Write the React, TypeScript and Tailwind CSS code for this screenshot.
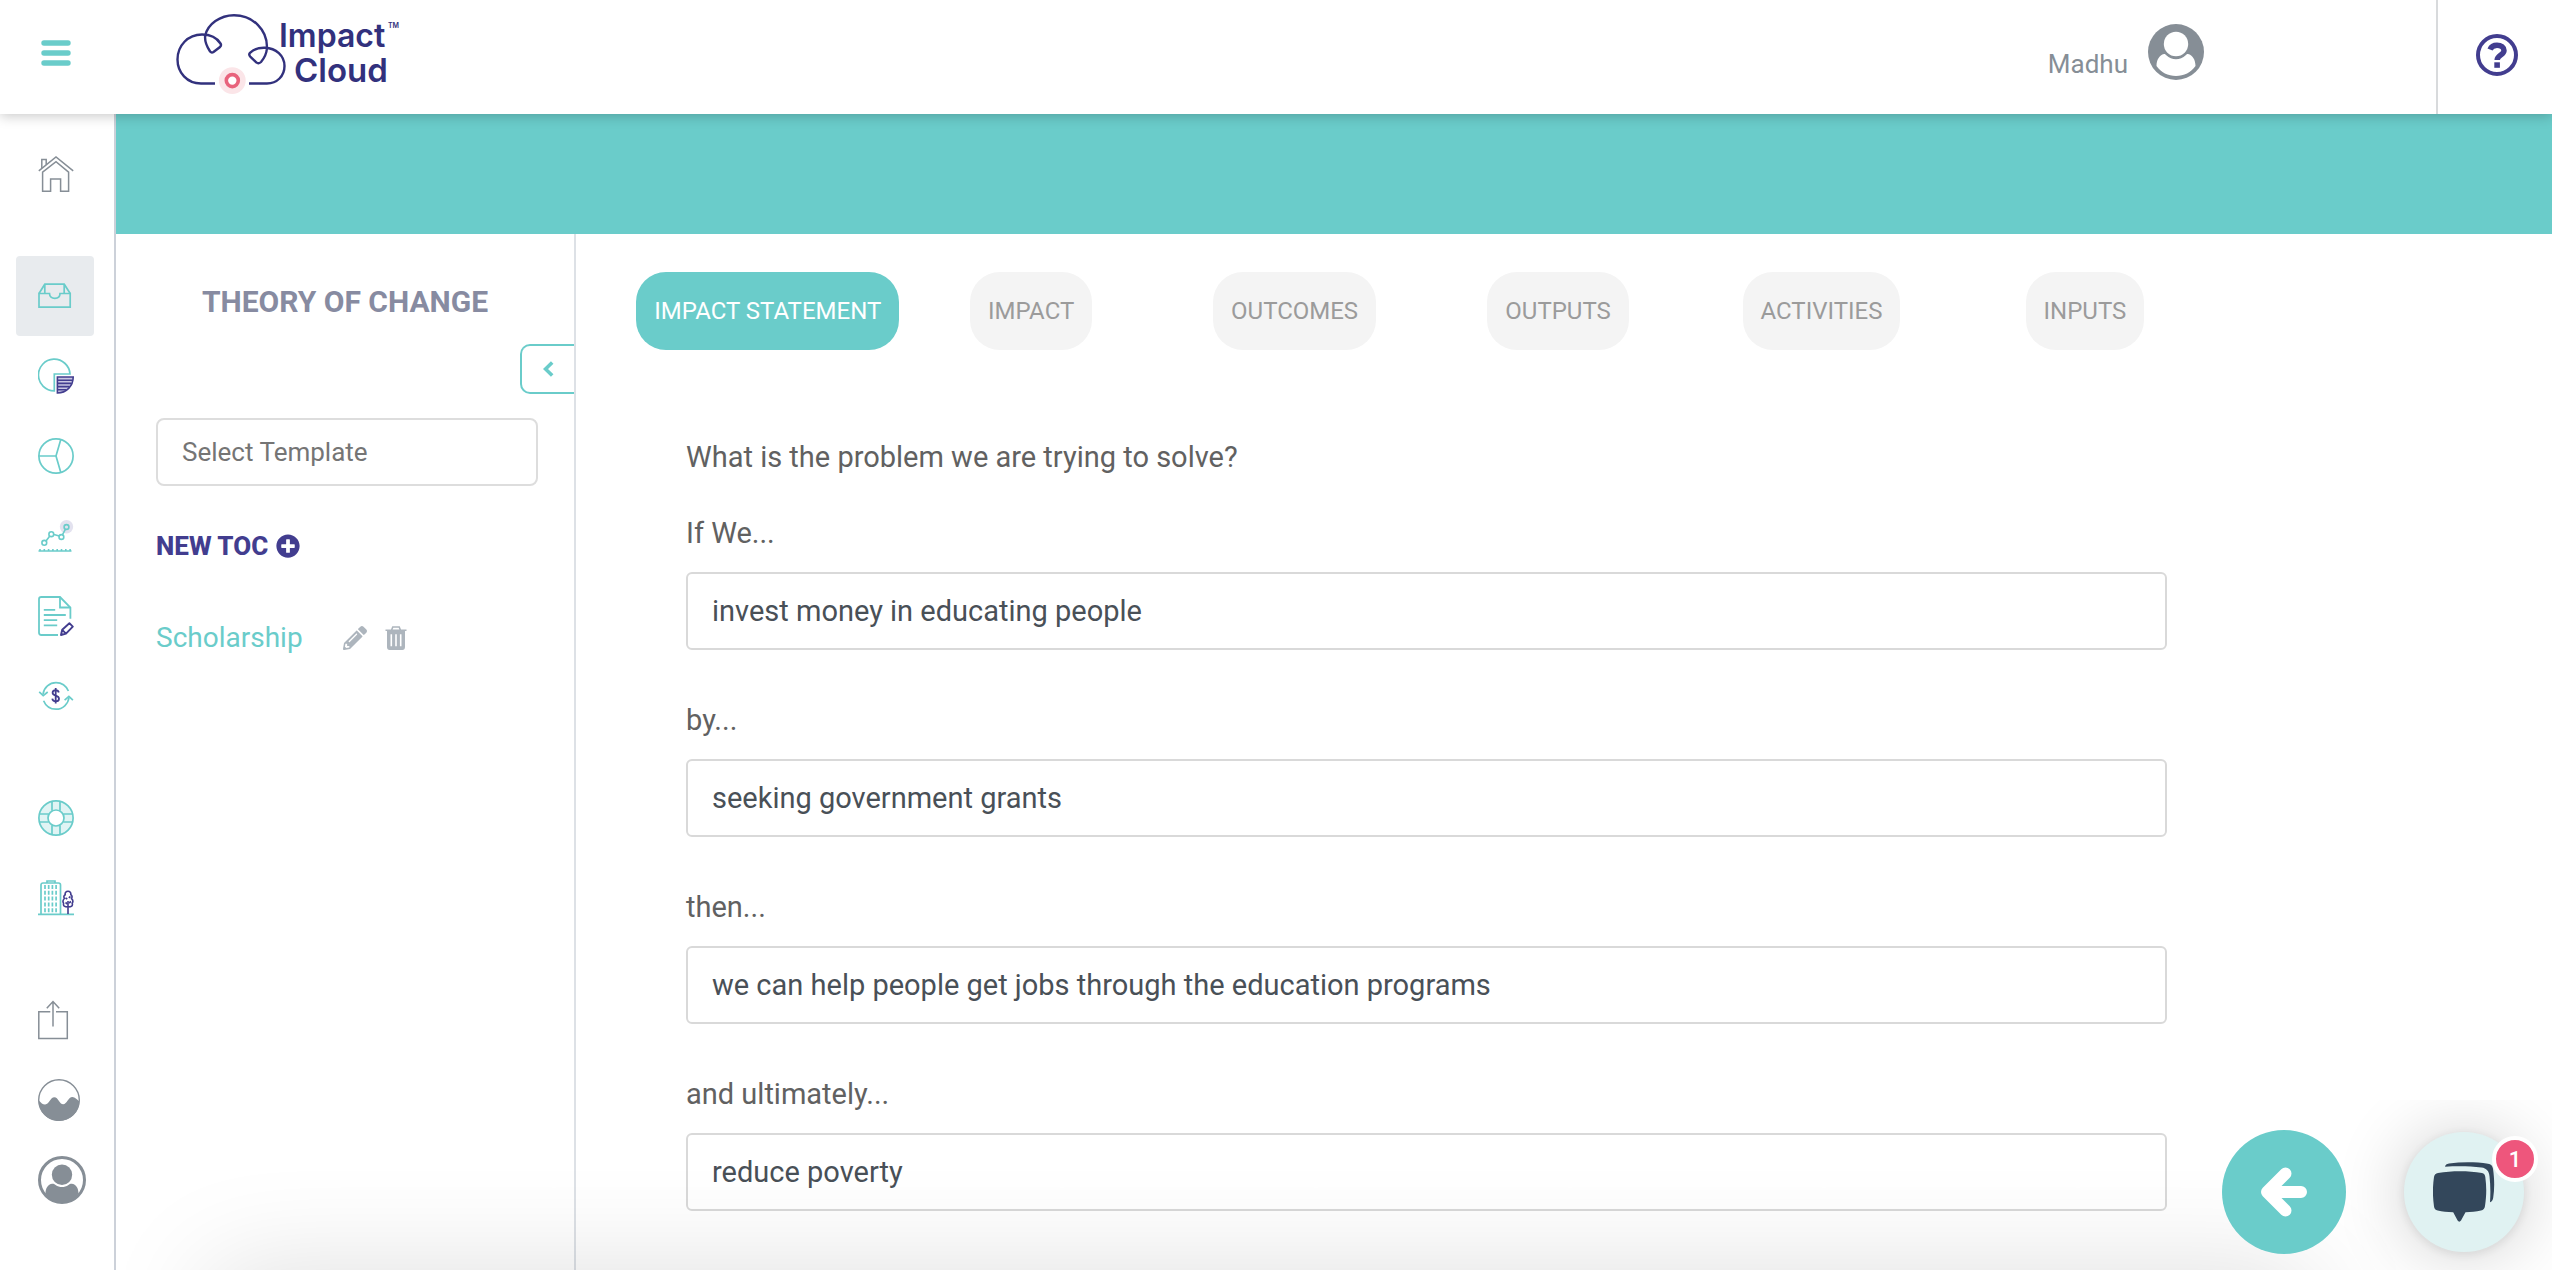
import type React from "react";
import { useState } from "react";
import { FaPencilAlt, FaPlusCircle } from "react-icons/fa";

// Icon wrapper, all sidebar drawings share it
const Icon = ({
  w,
  h,
  children,
}: { w: number; h: number; children: React.ReactNode }) => (
  <svg width={w} height={h} viewBox={`0 0 ${w} ${h}`} fill="none" aria-hidden="true">
    {children}
  </svg>
);

const TEAL = "#6accca";
const INDIGO = "#423d8f";
const GREY = "#868e96";

const HomeIcon = () => (
  <Icon w={36} h={36}>
    <g stroke={GREY} strokeWidth="1.5">
      <path d="M.8 14.8 18 1l17.2 13.8" />
      <path d="M3.6 16.2V35.2h8V23h10v12.2h8V16.2L17 5.6z" transform="translate(1 0)" />
      <path d="M3.8 12V3.6h4.4v5.2" />
    </g>
  </Icon>
);

const InboxIcon = () => (
  <Icon w={36} h={26}>
    <g stroke={TEAL} strokeWidth="1.7">
      <path d="M1 10.5V24.2h31.2V10.5H22c0 3-2.2 4.8-5.2 4.8s-5.3-1.8-5.3-4.8z" />
      <path d="M1 10.5 6.8 1.2h19.4l6 9.3" />
      <path d="M6.8 1.2v9.3M26.2 1.2v9.3" />
    </g>
  </Icon>
);

const PieIcon = () => (
  <Icon w={36} h={36}>
    <path d="M32 16A15.8 15.8 0 1 0 16.3 32.8V16z" stroke={TEAL} strokeWidth="1.7" />
    <path d="M19.4 19h15.8c0 9-6.8 16-15.8 16z" fill="#c9c7e2" stroke={INDIGO} strokeWidth="1.6" />
    <path d="M19.4 22.3h15M19.4 25.4h14M19.4 28.6h12M19.4 31.8h9" stroke={INDIGO} strokeWidth="1.6" />
  </Icon>
);

const SegmentsIcon = () => (
  <Icon w={36} h={36}>
    <g stroke={TEAL} strokeWidth="1.7">
      <circle cx="18" cy="18" r="17.1" />
      <path d="M.8 18H18L22.8 1.5M18 18l4.8 16.5" />
    </g>
  </Icon>
);

const TrendIcon = () => (
  <Icon w={36} h={32}>
    <circle cx="28.5" cy="6.8" r="6.7" fill="#e3e2ef" />
    <g stroke={TEAL} strokeWidth="1.6">
      <path d="m8 21 3.8-5M16 14.4l5.2 1.6M24.5 14.6l3-5.4" />
      <circle cx="6.3" cy="22.8" r="2.4" />
      <circle cx="13.3" cy="14.2" r="2.4" />
      <circle cx="23.4" cy="17" r="2.4" />
      <circle cx="28.5" cy="7" r="2.4" />
      <path d="M.5 31h33M2 31v-2M6.3 31v-2M10.6 31v-2M14.9 31v-2M19.2 31v-2M23.5 31v-2M27.8 31v-2M32.1 31v-2" />
    </g>
  </Icon>
);

const ReportIcon = () => (
  <Icon w={36} h={40}>
    <g stroke={TEAL} strokeWidth="1.8">
      <path d="M20 39H3.4C1.8 39 1 38.2 1 36.8V3.2C1 1.8 1.8 1 3.4 1H22l10.4 10.5v11.3" />
      <path d="M22 1v10.5h10.4M5.8 13.8h11.4M5.8 19h22M5.8 24.2h13.4M5.8 29.3h13.4" />
    </g>
    <path
      d="m23 39 1.2-5.2 7.2-6.6 3.4 3.4-6.8 7zM24.2 33.8l3.8 3.8"
      stroke={INDIGO}
      strokeWidth="1.9"
      strokeLinejoin="round"
    />
  </Icon>
);

const FundingIcon = () => (
  <Icon w={36} h={30}>
    <g stroke={TEAL} strokeWidth="1.7">
      <path d="M5 13C6 6.500 11.500 1.600 18 1.600c5.500 0 10.200 3.400 12.400 8.400" />
      <path d="m1.200 10.800 4 3.800 4.500-3.600" />
      <path d="M31 16.500C30.200 23 24.800 28.200 18 28.200c-5.600 0-10.400-3.400-12.400-8.400" />
      <path d="m26.600 19.200 4.300-3.900 4 3.900" />
    </g>
    <path
      d="M20.8 11.500c-.3-1.400-1.500-2.300-3.200-2.300-1.800 0-3 1-3 2.600 0 3.800 6.400 2 6.400 5.900 0 1.700-1.300 2.700-3.300 2.700-1.900 0-3.200-1-3.400-2.700M17.700 7v15.600"
      stroke={INDIGO}
      strokeWidth="1.8"
    />
  </Icon>
);

const SupportIcon = () => (
  <Icon w={36} h={36}>
    <circle cx="18" cy="18" r="12.5" stroke="#e0f4f4" strokeWidth="9" />
    <g stroke={TEAL} strokeWidth="1.7">
      <circle cx="18" cy="18" r="17.1" />
      <circle cx="18" cy="18" r="8" />
      <path d="M14 1.5v9.3M22 1.5v9.3M14 25.2v9.3M22 25.2v9.3M1.5 14h9.3M1.5 22h9.3M25.2 14h9.3M25.2 22h9.3" />
    </g>
  </Icon>
);

const BuildingIcon = () => (
  <Icon w={36} h={36}>
    <g stroke={TEAL} strokeWidth="1.7">
      <path d="M0 34.3h36M3 34V5c0-1.300.7-2 2-2h15.500c1.300 0 2 .7 2 2v29M9 3V1h8v2" />
      <path d="M7 5v28M10.700 5v28M14.400 5v28M18.100 5v28" strokeDasharray="4 1.8" />
    </g>
    <g stroke={INDIGO} strokeWidth="1.6">
      <path d="M30 34V21M30 11.300c-2 0-3.200 1.500-2.800 3.400-1.600.8-1.600 2.600-.8 3.800-1.600 1.500-1.700 3.400-.8 4.900-.6 2.500.8 3.500 4.400 3.500s5-1 4.200-3.600c1-1.500.7-3.400-.7-4.700.8-1.400.6-3-.7-3.900.3-1.900-.8-3.400-2.800-3.400z" />
      <path d="m27.500 18 1.800 1M32.500 16.500l-1.700 1.300M27.500 22.500l2 1.500M33 21.500l-2 1.500" />
    </g>
  </Icon>
);

const ShareIcon = () => (
  <Icon w={36} h={40}>
    <path
      d="M12.300 11.700H.8v26.800h28.500V11.700H18M15 26.500V2M8.800 8.300 15 1.600l6.200 6.700"
      stroke={GREY}
      strokeWidth="1.5"
    />
  </Icon>
);

const WaveIcon = () => (
  <Icon w={42} h={42}>
    <circle cx="21" cy="21" r="20.3" stroke={GREY} strokeWidth="1.4" />
    <path
      d="M.7 21.500c2.500 2.500 4.300 4.200 6.500 4 4.200-.5 5-7.300 9.200-7.300 3.800 0 5 7 8.800 7 3.700 0 5.200-7.200 9.200-7.200 2.700 0 4.200 2.200 6.900 4.500C40.800 33.500 32.200 42 21 42S.9 33.500.7 21.500z"
      fill={GREY}
    />
  </Icon>
);

const ProfileIcon = () => (
  <Icon w={48} h={48}>
    <circle cx="24" cy="24" r="22.5" stroke={GREY} strokeWidth="3" />
    <circle cx="24" cy="18.8" r="10.2" fill={GREY} />
    <path
      d="M7.500 37.500c0-5 2.300-9.500 6.800-9.800 1.500 0 2.200.5 3.300 1.300 3.900 2.800 8.900 2.800 12.800 0 1.100-.8 1.800-1.300 3.300-1.300 4.500.3 6.800 4.800 6.800 9.800C36.500 43.500 30.500 47 24 47S11.500 43.500 7.500 37.500z"
      fill={GREY}
    />
  </Icon>
);

const TrashIcon = () => (
  <svg width="22" height="24" viewBox="0 0 22 24" aria-hidden="true">
    <path
      d="M.5 4.200h21M6.600 4 7.800 1h6.400l1.200 3"
      fill="none"
      stroke="currentColor"
      strokeWidth="1.6"
    />
    <path
      fillRule="evenodd"
      fill="currentColor"
      d="M2 4.500h18V21c0 2-1 3-2.600 3H4.600C3 24 2 23 2 21zm3.500 3.700v12h1.600v-12zm4.700 0v12h1.600v-12zm4.700 0v12h1.600v-12z"
    />
  </svg>
);

const Logo = () => (
  <svg width="226" height="86" viewBox="174 10 226 86" role="img" aria-label="Impact Cloud">
    <path
      d="M215 83.5H201C187 83.5 177.5 72.5 177.5 59.5C177.5 45.5 188 34.5 202 34.5C210 34.5 217 38 220.5 43.5C221.5 45 221 46 220 47L213.5 52C212 53 210.5 52.5 209.8 51C206.5 46 204.5 41 205.2 35.5C208 24 220 15.3 234 15.3C253 15.3 267.5 30 267 48C266.5 54 264 58.5 261 62C259.5 63.5 257.5 63.5 256.5 62.5L250.5 57C249 55.5 249 54 250 52.8C254 49 260 47.5 265 47.7C276 48 284.5 56 284.5 66C284.5 76 277 83.5 267 83.5H249"
      fill="none"
      stroke="#32317d"
      strokeWidth="2.4"
    />
    <circle cx="232.3" cy="80.6" r="13.4" fill="#fbe5e8" />
    <circle cx="232.3" cy="80.6" r="6" fill="#fff" stroke="#e8637c" strokeWidth="3.6" />
    <g fill="#32317d" fontWeight="600" className="[font-family:Inter,sans-serif]">
      <text x="279" y="47" fontSize="32">
        Impact
      </text>
      <text x="294" y="82" fontSize="33">
        Cloud
      </text>
      <text x="388" y="28" fontSize="7">
        TM
      </text>
    </g>
  </svg>
);

type NavItem = { label: string; icon: React.ComponentType; active?: boolean };

// Sidebar entries, grouped the way they are spaced
const navGroups: NavItem[][] = [
  [{ label: "Home", icon: HomeIcon }],
  [
    { label: "Theory of Change", icon: InboxIcon, active: true },
    { label: "Portfolio", icon: PieIcon },
    { label: "Segments", icon: SegmentsIcon },
    { label: "Trends", icon: TrendIcon },
    { label: "Reports", icon: ReportIcon },
    { label: "Funding", icon: FundingIcon },
  ],
  [
    { label: "Support", icon: SupportIcon },
    { label: "Organization", icon: BuildingIcon },
  ],
  [
    { label: "Share", icon: ShareIcon },
    { label: "Activity", icon: WaveIcon },
    { label: "Profile", icon: ProfileIcon },
  ],
];

const tabs = ["IMPACT STATEMENT", "IMPACT", "OUTCOMES", "OUTPUTS", "ACTIVITIES", "INPUTS"];

const fields = [
  { id: "if-we", label: "If We...", value: "invest money in educating people" },
  { id: "by", label: "by...", value: "seeking government grants" },
  {
    id: "then",
    label: "then...",
    value: "we can help people get jobs through the education programs",
  },
  { id: "ultimately", label: "and ultimately...", value: "reduce poverty" },
];

const Header = () => (
  <header className="relative z-10 flex h-[114px] shrink-0 items-stretch bg-white shadow-[0_2px_12px_rgba(0,0,0,0.22)]">
    <button type="button" aria-label="Menu" className="flex w-[114px] items-center pb-2 pl-[41px]">
      <svg width="30" height="26" viewBox="0 0 30 26" aria-hidden="true">
        <path d="M3 3h24M3 13h24M3 23h24" stroke={TEAL} strokeWidth="5.4" strokeLinecap="round" />
      </svg>
    </button>
    <a href="#" className="ml-[60px] pt-[10px]">
      <Logo />
    </a>
    <div className="mr-[232px] ml-auto flex items-start gap-5 pt-6">
      <span className="pt-6 text-[26px] leading-8 text-[#868e96]">Madhu</span>
      <svg width="56" height="56" viewBox="0 0 56 56" aria-hidden="true">
        <circle cx="28" cy="28" r="28" fill={GREY} />
        <circle cx="28" cy="20" r="12.2" fill="#fff" />
        <path
          d="M8.500 42c0-6 2.800-11 7.500-12 1 0 1.500.5 2.300 1.300 5.500 5.300 13.900 5.300 19.400 0 .8-.8 1.300-1.300 2.300-1.300 4.700 1 7.500 6 7.500 12C43 48.500 36 52 28 52S13 48.500 8.500 42z"
          fill="#fff"
        />
      </svg>
    </div>
    <button
      type="button"
      aria-label="Help"
      className="flex w-[116px] items-center border-l-2 border-[#d8dadc] pb-1 pl-[38px]"
    >
      <svg width="42" height="42" viewBox="0 0 42 42" fill="none" aria-hidden="true">
        <circle cx="21" cy="21" r="19" stroke={INDIGO} strokeWidth="4" />
        <path
          d="M14 15.500c1.300-3 4-4.300 7-4.300 4.200 0 7 2.300 7 5.300 0 4.700-6.800 4.200-6.800 9.500"
          stroke={INDIGO}
          strokeWidth="5.5"
        />
        <path d="M18.300 28.300h5.600v5.500h-5.600z" fill={INDIGO} />
      </svg>
    </button>
  </header>
);

const Sidebar = () => (
  <nav className="flex w-[116px] shrink-0 flex-col gap-[42px] border-r-2 border-[#ccd1d9] pt-5 pl-4">
    {navGroups.map((group) => (
      <div key={group[0].label}>
        {group.map(({ label, icon: NavIcon, active }) => (
          <a
            key={label}
            href="#"
            aria-label={label}
            className={`flex h-20 w-[78px] items-center rounded pl-[22px] ${
              active ? "bg-[#e8ebee]" : ""
            }`}
          >
            <NavIcon />
          </a>
        ))}
      </div>
    ))}
  </nav>
);

const TemplatePanel = () => (
  <aside className="flex w-[460px] shrink-0 flex-col border-r-2 border-[#dde1e6] pt-[46px]">
    <h1 className="text-center text-[30px] leading-[44px] font-bold text-[#878ba1]">
      THEORY OF CHANGE
    </h1>
    <button
      type="button"
      aria-label="Collapse panel"
      className="mt-5 flex h-[50px] w-[54px] items-center self-end rounded-l-[10px] border-2 border-r-0 border-[#6accca] pl-[21px]"
    >
      <svg width="11" height="16" viewBox="0 0 11 16" fill="none" aria-hidden="true">
        <path d="M9.200 1.500 2.500 8l6.700 6.500" stroke={TEAL} strokeWidth="3.6" />
      </svg>
    </button>
    <div className="flex flex-col items-start pt-6 pr-9 pl-10">
      <input
        type="text"
        aria-label="Select Template"
        placeholder="Select Template"
        className="h-[68px] w-full rounded-lg border-2 border-[#ddd] px-6 text-[26px] text-[#495057] placeholder:text-[#757575]"
      />
      <button
        type="button"
        className="mt-10 flex h-10 items-center gap-2 text-[26px] font-extrabold text-[#423d8f]"
      >
        NEW TOC
        <FaPlusCircle size={24} />
      </button>
      <div className="mt-[52px] flex h-10 items-center">
        <a href="#" className="text-[28px] text-[#6accca]">
          Scholarship
        </a>
        <button type="button" aria-label="Edit Scholarship" className="ml-10 text-[#adb5bd]">
          <FaPencilAlt size={24} />
        </button>
        <button type="button" aria-label="Delete Scholarship" className="ml-[18px] text-[#adb5bd]">
          <TrashIcon />
        </button>
      </div>
    </div>
  </aside>
);

export default function App() {
  const [activeTab, setActiveTab] = useState(tabs[0]);

  return (
    <div className="flex min-h-screen flex-col bg-white [font-family:Roboto,sans-serif]">
      <Header />

      <div className="flex flex-1">
        <Sidebar />

        <div className="flex flex-1 flex-col">
          <div className="h-[120px] bg-[#6accca]" />

          <div className="flex flex-1">
            <TemplatePanel />

            <main className="flex-1 pl-[60px] pt-[38px]">
              <div className="w-[82.5%]">
                <div className="grid grid-cols-6 justify-items-center">
                  {tabs.map((tab) => (
                    <button
                      key={tab}
                      type="button"
                      onClick={() => setActiveTab(tab)}
                      className={`h-[78px] rounded-[30px] px-[18px] text-[24px] whitespace-nowrap ${
                        tab === activeTab
                          ? "bg-[#6accca] text-white"
                          : "bg-[#f4f4f4] text-[#9b9b9b]"
                      }`}
                    >
                      {tab}
                    </button>
                  ))}
                </div>

                <form className="px-[50px] pt-[87px] text-[29px] leading-10 text-[#616161]">
                  <p className="mb-9">What is the problem we are trying to solve?</p>
                  <div className="flex flex-col gap-[50px]">
                    {fields.map((field) => (
                      <div key={field.id} className="flex flex-col gap-[19px]">
                        <label htmlFor={field.id}>{field.label}</label>
                        <input
                          id={field.id}
                          type="text"
                          defaultValue={field.value}
                          className="h-[78px] w-full rounded-md border-2 border-[#d9d9d9] px-6 text-[#495057]"
                        />
                      </div>
                    ))}
                  </div>
                </form>
              </div>
            </main>
          </div>
        </div>
      </div>

      {/* Soft shade along the bottom of the window */}
      <div className="pointer-events-none fixed top-full right-[240px] left-[210px] h-40 shadow-[0_0_110px_rgba(0,0,0,0.13)]" />

      <button
        type="button"
        aria-label="Back"
        className="fixed right-[206px] bottom-4 flex size-[124px] items-center justify-center rounded-full bg-[#6accca]"
      >
        <svg width="46" height="50" viewBox="0 0 46 50" fill="none" aria-hidden="true">
          <path
            d="M40 25H14M24.500 6.500 6 25l18.500 18.500"
            stroke="#fff"
            strokeWidth="12"
            strokeLinecap="round"
            strokeLinejoin="round"
          />
        </svg>
      </button>

      {/* Chat launcher */}
      <div className="pointer-events-none fixed right-0 bottom-0 h-[170px] w-[208px] overflow-hidden">
        <button
          type="button"
          aria-label="Open chat"
          className="pointer-events-auto absolute right-7 bottom-[18px] flex size-[120px] items-center justify-center rounded-full bg-[#e0f2f2] shadow-[0_2px_12px_rgba(0,0,0,0.1),0_2px_72px_rgba(0,0,0,0.2)]"
        >
          <svg width="62" height="60" viewBox="0 0 62 60" fill="#33475b" aria-hidden="true">
            <path d="M5 11c14-2.300 30-2.300 44 0 2 .5 3 1.800 3.300 4 1.300 9.500 1.300 18-.3 29-.4 2.500-1.500 4-4 4.500-5 1-10 1.500-15.500 1.700L28 58.500c-1 1.500-2.500 1.500-3.400 0l-4.400-8.300c-6-.2-11-.7-15.500-1.700C2.500 48 1.300 46.700 1 44.500-.5 33-.4 25 1 15c.4-2.200 1.700-3.500 4-4z" />
            <path d="M12 4.800C12.400 3 13.500 2 16 1.600c13-1.800 27-1.600 39 .2 3 .5 4.500 2 5 5 1.500 10.500 1.600 19.500.2 29-.4 2.500-1.500 4-3.200 4.400.7-9.500.4-18-.5-26-.5-5-3-8-8-8.600C37 4.200 25 4 12 4.800z" />
          </svg>
        </button>
        <span className="absolute right-[14px] bottom-[88px] flex size-[46px] items-center justify-center rounded-full border-4 border-white bg-[#ee567c] text-[22px] font-medium text-white">
          1
        </span>
      </div>
    </div>
  );
}
